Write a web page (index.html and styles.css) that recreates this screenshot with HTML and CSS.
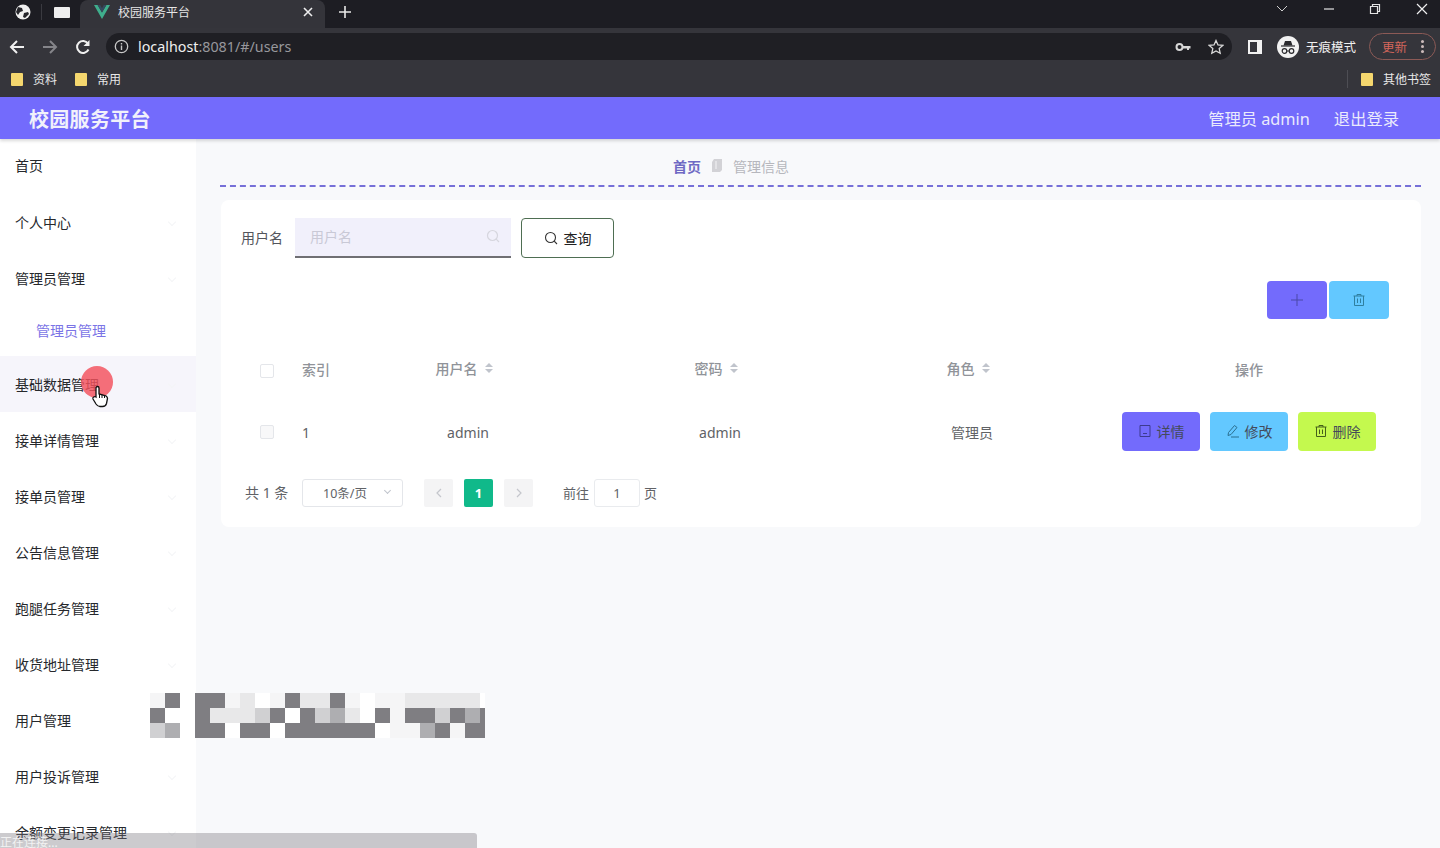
FILE: index.html
```html
<!DOCTYPE html>
<html lang="zh-CN">
<head>
	<meta charset="UTF-8">
	<title>校园服务平台</title>
	<link rel="stylesheet" href="styles.css">
</head>
<body>
	<div class="tabstrip">
		<svg class="tb-globe" width="16" height="16" viewBox="0 0 16 16"><circle cx="8" cy="8" r="7.5" fill="#f1f1f1"/><path d="M3 3l4 1 1 3-3 1-2 3-2-3zM9 9l4-1 1 2-4 4-2-1z" fill="#26262b"/></svg>
		<span class="tb-sep"></span>
		<span class="tb-win"></span>
		<div class="tab">
			<svg class="tab-logo" width="16" height="14" viewBox="0 0 16 14"><path d="M0 0h3.6L8 7.6 12.4 0H16L8 14z" fill="#3fae8c"/><path d="M3.6 0h2.6L8 3.2 9.8 0h2.6L8 7.6z" fill="#35495e"/></svg>
			<span class="tab-title">校园服务平台</span>
			<svg class="tab-x" width="10" height="10" viewBox="0 0 10 10"><path d="M1 1l8 8M9 1l-8 8" stroke="#eee" stroke-width="1.6"/></svg>
		</div>
		<svg class="tb-plus" width="14" height="14" viewBox="0 0 14 14"><path d="M7 1v12M1 7h12" stroke="#e8e8e8" stroke-width="1.6"/></svg>
		<div class="win-btns">
			<svg width="12" height="8" viewBox="0 0 12 8"><path d="M1 1l5 5 5-5" fill="none" stroke="#cfcfcf" stroke-width="1"/></svg>
			<svg width="12" height="12" viewBox="0 0 12 12"><path d="M1 6h10" stroke="#e4e4e4" stroke-width="1.2"/></svg>
			<svg width="12" height="12" viewBox="0 0 12 12"><path d="M1.5 3.5h7v7h-7zM3.5 3.5v-2h7v7h-2" fill="none" stroke="#e4e4e4" stroke-width="1.2"/></svg>
			<svg width="12" height="12" viewBox="0 0 12 12"><path d="M1 1l10 10M11 1L1 11" stroke="#f0f0f0" stroke-width="1.2"/></svg>
		</div>
	</div>

	<div class="toolbar">
		<svg class="nav-ic" width="16" height="16" viewBox="0 0 16 16"><path d="M15 8H2M8 2L2 8l6 6" fill="none" stroke="#f0f0f0" stroke-width="2"/></svg>
		<svg class="nav-ic" width="16" height="16" viewBox="0 0 16 16"><path d="M1 8h13M8 2l6 6-6 6" fill="none" stroke="#85858a" stroke-width="2"/></svg>
		<svg class="nav-ic" width="16" height="16" viewBox="0 0 16 16"><path d="M13.5 10.5A6 6 0 1 1 13 4.5" fill="none" stroke="#f0f0f0" stroke-width="2"/><path d="M14.5 1v6h-6z" fill="#f0f0f0"/></svg>
		<div class="omnibox">
			<svg width="15" height="15" viewBox="0 0 15 15"><circle cx="7.5" cy="7.5" r="6.2" fill="none" stroke="#c8c8c8" stroke-width="1.3"/><path d="M7.5 6.6v4.4M7.5 4v1.6" stroke="#c8c8c8" stroke-width="1.4"/></svg>
			<span class="url">localhost<em>:8081/#/users</em></span>
			<svg class="omni-key" width="16" height="10" viewBox="0 0 16 10"><circle cx="4.5" cy="5" r="3" fill="none" stroke="#d8d8d8" stroke-width="2"/><path d="M7.5 4h8v2.5H14V8h-2V6.5H7.5z" fill="#d8d8d8"/></svg>
			<svg width="16" height="16" viewBox="0 0 16 16"><path d="M8 1.5l2 4.4 4.800.5-3.600 3.200 1 4.700L8 11.900l-4.200 2.400 1-4.700L1.200 6.400 6 5.900z" fill="none" stroke="#d8d8d8" stroke-width="1.3"/></svg>
		</div>
		<span class="side-ic"></span>
		<div class="incog">
			<span class="incog-ic">
				<svg width="22" height="22" viewBox="0 0 22 22"><path d="M6.500 9.500L8 5h6l1.500 4.500z" fill="#2a2a2e"/><path d="M4 10h14" stroke="#2a2a2e" stroke-width="1.2"/><circle cx="7.500" cy="15" r="2.300" fill="none" stroke="#2a2a2e" stroke-width="1.2"/><circle cx="14.500" cy="15" r="2.300" fill="none" stroke="#2a2a2e" stroke-width="1.2"/><path d="M9.800 15h2.400" stroke="#2a2a2e" stroke-width="1"/></svg>
			</span>
			<span>无痕模式</span>
		</div>
		<div class="update"><span>更新</span><i class="dots"></i></div>
	</div>

	<div class="bookmarks">
		<div class="bm"><i class="folder"></i>资料</div>
		<div class="bm"><i class="folder"></i>常用</div>
		<div class="bm bm-other"><i class="folder"></i>其他书签</div>
	</div>

	<header class="head">
		<h1 class="logo">校园服务平台</h1>
		<div class="head-right">
			<span>管理员 admin</span>
			<span>退出登录</span>
		</div>
	</header>

	<div class="layout">
		<ul class="side">
			<li class="side-item side-first">首页</li>
			<li class="side-item">个人中心<i class="chev"></i></li>
			<li class="side-item">管理员管理<i class="chev"></i></li>
			<li class="side-sub">管理员管理</li>
			<li class="side-item side-hover">基础数据管理<i class="chev"></i></li>
			<li class="side-item">接单详情管理<i class="chev"></i></li>
			<li class="side-item">接单员管理<i class="chev"></i></li>
			<li class="side-item">公告信息管理<i class="chev"></i></li>
			<li class="side-item">跑腿任务管理<i class="chev"></i></li>
			<li class="side-item">收货地址管理<i class="chev"></i></li>
			<li class="side-item">用户管理<i class="chev"></i></li>
			<li class="side-item">用户投诉管理<i class="chev"></i></li>
			<li class="side-item">余额变更记录管理<i class="chev"></i></li>
		</ul>

		<main class="main">
			<div class="crumb">
				<span class="crumb-home">首页</span>
				<svg width="12" height="15" viewBox="0 0 12 15"><path d="M3 1h8v11l-2 2H1V4z" fill="#d2d2d6"/><path d="M5 3v8" stroke="#f4f4f6" stroke-width="1"/></svg>
				<span class="crumb-cur">管理信息</span>
			</div>

			<section class="card">
				<div class="search">
					<label class="search-label">用户名</label>
					<div class="search-input">
						<span>用户名</span>
						<svg width="14" height="14" viewBox="0 0 14 14"><circle cx="6.5" cy="6.5" r="5" fill="none" stroke="#d6d6de" stroke-width="1.2"/><path d="M10.200 10.200L13 13" stroke="#d6d6de" stroke-width="1.2"/></svg>
					</div>
					<button class="search-btn">
						<svg width="14" height="14" viewBox="0 0 14 14"><circle cx="6.5" cy="6.5" r="5" fill="none" stroke="#333" stroke-width="1.1"/><path d="M10.200 10.200L13 13" stroke="#333" stroke-width="1.1"/></svg>
						查询
					</button>
				</div>

				<div class="tools">
					<button class="btn-tool purple">
						<svg width="14" height="14" viewBox="0 0 14 14"><path d="M7 1v12M1 7h12" stroke="#4a48a8" stroke-width="1"/></svg>
					</button>
					<button class="btn-tool blue">
						<svg width="14" height="14" viewBox="0 0 14 14"><path d="M1.500 3h11M5 3V1.500h4V3M2.500 3v9.500h9V3M5.500 5.500v4.500M8.500 5.500v4.500" fill="none" stroke="#2f7f9f" stroke-width="1"/></svg>
					</button>
				</div>

				<div class="table">
					<div class="tr th">
						<div class="cell"><i class="check"></i></div>
						<div class="cell cell-left cell-lift">索引</div>
						<div class="cell cell-up">用户名<i class="sort"></i></div>
						<div class="cell cell-up">密码<i class="sort"></i></div>
						<div class="cell cell-up">角色<i class="sort"></i></div>
						<div class="cell cell-lift">操作</div>
					</div>
					<div class="tr td">
						<div class="cell"><i class="check check-row"></i></div>
						<div class="cell cell-left">1</div>
						<div class="cell">admin</div>
						<div class="cell">admin</div>
						<div class="cell">管理员</div>
						<div class="cell ops">
							<button class="btn-op purple">
								<svg width="14" height="14" viewBox="0 0 14 14"><path d="M2 1.500h10v11H2zM5 9.500h4" fill="none" stroke="#3d3b90" stroke-width="1"/></svg>
								详情
							</button>
							<button class="btn-op blue">
								<svg width="14" height="14" viewBox="0 0 14 14"><path d="M8.500 1.500l2.500 2-6 7-3 1 .5-3zM5 13h8" fill="none" stroke="#2a6f90" stroke-width="1"/></svg>
								修改
							</button>
							<button class="btn-op lime">
								<svg width="14" height="14" viewBox="0 0 14 14"><path d="M1.500 3h11M5 3V1.500h4V3M2.500 3v9.500h9V3M5.500 5.500v4.500M8.500 5.500v4.500" fill="none" stroke="#45601a" stroke-width="1"/></svg>
								删除
							</button>
						</div>
					</div>
				</div>

				<div class="pager">
					<span class="total">共 1 条</span>
					<div class="size">10条/页<i class="size-arrow"></i></div>
					<button class="page page-prev">
						<svg width="8" height="10" viewBox="0 0 8 10"><path d="M6 1L2 5l4 4" fill="none" stroke="#c4c6cc" stroke-width="1.2"/></svg>
					</button>
					<button class="page page-on">1</button>
					<button class="page page-next">
						<svg width="8" height="10" viewBox="0 0 8 10"><path d="M2 1l4 4-4 4" fill="none" stroke="#c4c6cc" stroke-width="1.2"/></svg>
					</button>
					<span class="goto">前往</span>
					<div class="goto-input">1</div>
					<span class="goto-end">页</span>
				</div>
			</section>
		</main>
	</div>

	<!-- 打码区域 -->
	<div class="mosaic">
		<i class="w"></i><i class="d"></i><i class="n"></i><i class="d"></i><i class="d"></i><i class="w"></i><i class="l"></i><i class="n"></i><i class="w"></i><i class="d"></i><i class="l"></i><i class="l"></i><i class="d"></i><i class="w"></i><i class="n"></i><i class="w"></i><i class="w"></i><i class="l"></i><i class="l"></i><i class="l"></i><i class="l"></i><i class="l"></i><i class="n"></i>
		<i class="d"></i><i class="n"></i><i class="n"></i><i class="d"></i><i class="l"></i><i class="l"></i><i class="l"></i><i class="m"></i><i class="d"></i><i class="n"></i><i class="d"></i><i class="m"></i><i class="s"></i><i class="l"></i><i class="n"></i><i class="d"></i><i class="w"></i><i class="d"></i><i class="d"></i><i class="m"></i><i class="d"></i><i class="s"></i><i class="d"></i>
		<i class="m"></i><i class="s"></i><i class="n"></i><i class="d"></i><i class="d"></i><i class="n"></i><i class="d"></i><i class="d"></i><i class="n"></i><i class="d"></i><i class="d"></i><i class="d"></i><i class="d"></i><i class="d"></i><i class="d"></i><i class="n"></i><i class="w"></i><i class="w"></i><i class="s"></i><i class="d"></i><i class="w"></i><i class="d"></i><i class="d"></i>
	</div>

	<!-- 鼠标点击效果 -->
	<div class="click-dot"></div>
	<svg class="hand" width="18" height="24" viewBox="0 0 18 24"><path d="M5 13V4a1.500 1.500 0 0 1 3 0v6l6 1.500c1.500.5 2.500 1.500 2.500 3l-1 5c-.5 2-2 3-4 3H9c-2 0-3-1-4-2.500L2 15c-.8-1.500 1.500-3 3-2z" fill="#fff" stroke="#111" stroke-width="1.3"/><path d="M8.500 10v4M11 10.500V14M13.500 11v3" stroke="#111" stroke-width="1"/></svg>

	<div class="status">正在连接...</div>
</body>
</html>
```

FILE: styles.css
```css
*{
	box-sizing: border-box;
}
html,body{
	margin: 0;
	padding: 0;
}
body{
	width: 1440px;
	height: 848px;
	overflow: hidden;
	position: relative;
	display: flex;
	flex-direction: column;
	background-color: #f8f9fb;
	font-family: "Noto Sans", "Noto Sans CJK SC", sans-serif;
	font-size: 14px;
	color: #303133;
}
ul{
	list-style: none;
	margin: 0;
	padding: 0;
}
button{
	font-family: inherit;
	border: none;
	padding: 0;
}

/* 浏览器外框 */
.tabstrip{
	height: 28px;
	flex: none;
	display: flex;
	align-items: center;
	padding-bottom: 4px;
	background-color: #1d1d23;
}
.tb-globe{
	margin-left: 15px;
}
.tb-sep{
	width: 1px;
	height: 16px;
	margin-left: 10px;
	background-color: #3a3a40;
}
.tb-win{
	width: 16px;
	height: 11px;
	margin-left: 12px;
	background-color: #eee;
	border-radius: 1px;
}
.tab{
	width: 245px;
	height: 28px;
	align-self: flex-start;
	margin-left: 10px;
	padding: 0 12px 4px 14px;
	display: flex;
	align-items: center;
	background-color: #34343a;
	border-radius: 8px 8px 0 0;
}
.tab-title{
	margin-left: 8px;
	flex: 1;
	font-size: 12px;
	color: #e6e6e6;
}
.tb-plus{
	margin-left: 13px;
}
.win-btns{
	margin-left: auto;
	width: 164px;
	padding-right: 12px;
	display: flex;
	justify-content: space-between;
	align-items: center;
	align-self: flex-start;
	height: 18px;
}
.toolbar{
	height: 37px;
	flex: none;
	display: flex;
	align-items: center;
	padding-left: 9px;
	background-color: #35353b;
}
.nav-ic{
	margin-right: 17px;
}
.omnibox{
	width: 1126px;
	height: 27px;
	margin-left: -2px;
	padding: 0 8px 0 8px;
	display: flex;
	align-items: center;
	background-color: #1f1f24;
	border-radius: 14px;
}
.url{
	margin-left: 9px;
	flex: 1;
	font-size: 14.3px;
	color: #efefef;
}
.url em{
	font-style: normal;
	color: #97979c;
}
.omni-key{
	margin-right: 17px;
}
.side-ic{
	width: 14px;
	height: 14px;
	margin-left: 16px;
	border: 2px solid #f2f2f2;
	border-right-width: 5px;
}
.incog{
	margin-left: 15px;
	display: flex;
	align-items: center;
	gap: 7px;
	font-size: 12.5px;
	color: #f0f0f0;
}
.incog-ic{
	width: 22px;
	height: 22px;
	border-radius: 50%;
	background-color: #f2f2f2;
	display: block;
}
.incog-ic svg{
	display: block;
}
.update{
	width: 67px;
	height: 27px;
	margin-left: 13px;
	padding-left: 12px;
	display: flex;
	align-items: center;
	justify-content: space-between;
	padding-right: 11px;
	font-size: 12.5px;
	color: #d4665c;
	border: 1px solid #8c5a56;
	border-radius: 14px;
}
.dots{
	width: 3px;
	height: 3px;
	border-radius: 50%;
	background-color: #cbb;
	box-shadow: 0 -5px 0 #cbb, 0 5px 0 #cbb;
}
.bookmarks{
	height: 32px;
	flex: none;
	display: flex;
	align-items: center;
	padding: 0 0 4px 11px;
	font-size: 12px;
	color: #e8e8e8;
	background-color: #35353b;
}
.bm{
	display: flex;
	align-items: center;
	margin-right: 18px;
}
.bm-other{
	margin-left: auto;
	margin-right: 9px;
	padding-left: 13px;
	border-left: 1px solid #4e4e54;
	height: 18px;
}
.folder{
	width: 12px;
	height: 13px;
	margin-right: 10px;
	background-color: #f5d76e;
	border-radius: 1px;
}

/* 顶部栏 */
.head{
	height: 42px;
	flex: none;
	display: flex;
	align-items: center;
	justify-content: space-between;
	padding: 0 41px 0 29px;
	background-color: #736bfc;
	box-shadow: 0 2px 3px rgba(0,0,0,0.15);
	color: #fff;
	position: relative;
}
.logo{
	margin: 0;
	font-size: 20px;
	font-weight: 700;
	letter-spacing: 0.3px;
	color: #f1f1fb;
}
.head-right{
	display: flex;
	gap: 24px;
	font-size: 16.3px;
	color: #eaeafc;
}

/* 主体 */
.layout{
	flex: 1;
	display: flex;
	min-height: 0;
}
.side{
	width: 196px;
	flex: none;
	margin-top: -1px;
	overflow: hidden;
	background-color: #fff;
}
.side-item{
	height: 56px;
	padding-left: 15px;
	display: flex;
	align-items: center;
	justify-content: space-between;
	padding-right: 21px;
	color: #26282c;
}
.side-first{
	padding-bottom: 2px;
}
.side-sub{
	height: 50px;
	padding: 0 0 2px 36px;
	display: flex;
	align-items: center;
	color: #7b74e6;
}
.side-hover{
	background-color: #f6f5fb;
}
.chev{
	width: 6px;
	height: 6px;
	border-right: 1px solid #f4f5f7;
	border-bottom: 1px solid #f4f5f7;
	transform: rotate(45deg);
}
.main{
	flex: 1;
	min-width: 0;
	padding: 0 19px 0 24px;
}
.crumb{
	height: 48px;
	padding: 7px 0 0 453px;
	display: flex;
	align-items: center;
	gap: 10px;
	border-bottom: 2px dashed #7670d8;
}
.crumb-home{
	font-weight: 700;
	color: #6f69c4;
}
.crumb-cur{
	color: #b6b7bd;
}
.card{
	margin: 13px 0 0 1px;
	height: 327px;
	padding: 18px 22px 0 20px;
	background-color: #fff;
	border-radius: 8px;
}
.search{
	height: 40px;
	display: flex;
	align-items: center;
}
.search-label{
	width: 54px;
	margin-bottom: 3px;
	color: #53555c;
}
.search-input{
	width: 216px;
	height: 40px;
	padding: 0 11px 2px 15px;
	display: flex;
	align-items: center;
	justify-content: space-between;
	background-color: #f1f0fb;
	border-bottom: 2px solid #6f6f73;
	color: #c9c9d6;
}
.search-btn{
	width: 93px;
	height: 40px;
	margin-left: 10px;
	display: flex;
	align-items: center;
	justify-content: center;
	gap: 6px;
	font-size: 14px;
	color: #222;
	background-color: #fff;
	border: 1px solid #4e6e52;
	border-radius: 4px;
}
.tools{
	margin: 23px 10px 0 0;
	display: flex;
	justify-content: flex-end;
	gap: 2px;
}
.btn-tool{
	width: 60px;
	height: 38px;
	display: flex;
	align-items: center;
	justify-content: center;
	border-radius: 4px;
}
.purple{
	background-color: #736bfc;
}
.blue{
	background-color: #63c8ff;
}
.lime{
	background-color: #c4f94e;
}
.table{
	margin-top: 21px;
}
.tr{
	display: grid;
	grid-template-columns: 51px 50px 252px 252px 252px 302px;
	align-items: center;
}
.th{
	height: 62px;
	color: #909399;
	font-weight: 500;
}
.td{
	height: 60px;
	color: #606266;
}
.cell{
	display: flex;
	align-items: center;
	justify-content: center;
}
.cell-left{
	justify-content: flex-start;
	padding-left: 10px;
}
.cell-lift{
	padding-bottom: 4px;
}
.cell-up{
	padding: 0 8px 6px 0;
}
.check{
	width: 14px;
	height: 14px;
	background-color: #fff;
	border: 1px solid #e4e6ea;
	border-radius: 2px;
}
.check-row{
	background-color: #f8f8f9;
}
.sort{
	width: 0;
	height: 0;
	margin-left: 7px;
	border-left: 4px solid transparent;
	border-right: 4px solid transparent;
	border-bottom: 4px solid #c0c4cc;
	position: relative;
	top: -3px;
}
.sort::after{
	content: "";
	position: absolute;
	left: -4px;
	top: 6px;
	border-left: 4px solid transparent;
	border-right: 4px solid transparent;
	border-top: 4px solid #c0c4cc;
}
.ops{
	gap: 10px;
	margin-top: -2px;
}
.btn-op{
	width: 78px;
	height: 39px;
	display: flex;
	align-items: center;
	justify-content: center;
	gap: 5px;
	font-size: 14px;
	color: #444a5a;
	border-radius: 4px;
}
.pager{
	margin-top: 17px;
	height: 28px;
	padding-left: 4px;
	display: flex;
	align-items: center;
	color: #606266;
	font-size: 13px;
}
.total{
	width: 57px;
	margin-bottom: 2px;
	font-size: 14px;
}
.size{
	width: 101px;
	height: 28px;
	padding: 0 12px 2px 20px;
	display: flex;
	align-items: center;
	justify-content: space-between;
	font-size: 12.5px;
	border: 1px solid #e4e6ea;
	border-radius: 3px;
}
.size-arrow{
	width: 5px;
	height: 5px;
	margin-top: -3px;
	border-right: 1px solid #c0c4cc;
	border-bottom: 1px solid #c0c4cc;
	transform: rotate(45deg);
}
.page{
	width: 29px;
	height: 28px;
	display: flex;
	align-items: center;
	justify-content: center;
	background-color: #f4f4f5;
	border-radius: 2px;
}
.page-prev{
	margin-left: 21px;
}
.page-on{
	margin: 0 11px;
	font-weight: 700;
	font-size: 13px;
	color: #fff;
	background-color: #10b98a;
}
.goto{
	margin: 0 0 2px 30px;
	width: 31px;
}
.goto-input{
	width: 46px;
	height: 28px;
	display: flex;
	align-items: center;
	justify-content: center;
	border: 1px solid #e9ebee;
	border-radius: 3px;
}
.goto-end{
	margin: 0 0 2px 4px;
}

/* 覆盖层 */
.mosaic{
	position: absolute;
	left: 150px;
	top: 693px;
	display: grid;
	grid-template-columns: repeat(22, 15px) 5px;
	grid-auto-rows: 15px;
}
.mosaic i{
	display: block;
}
.n{
	background-color: #fff;
}
.w{
	background-color: #f5f5f6;
}
.l{
	background-color: #e8e8e9;
}
.m{
	background-color: #d0d0d2;
}
.s{
	background-color: #aeaeb1;
}
.d{
	background-color: #7f7e82;
}
.click-dot{
	position: absolute;
	left: 81px;
	top: 366px;
	width: 32px;
	height: 32px;
	border-radius: 50%;
	background-color: rgba(243,80,92,0.82);
}
.hand{
	position: absolute;
	left: 91px;
	top: 384px;
}
.status{
	position: absolute;
	left: 0;
	bottom: 0;
	width: 477px;
	height: 15px;
	font-size: 12px;
	line-height: 20px;
	color: #f2f2f2;
	overflow: hidden;
	background-color: rgba(120,118,125,0.38);
	border-radius: 0 3px 0 0;
}
```
